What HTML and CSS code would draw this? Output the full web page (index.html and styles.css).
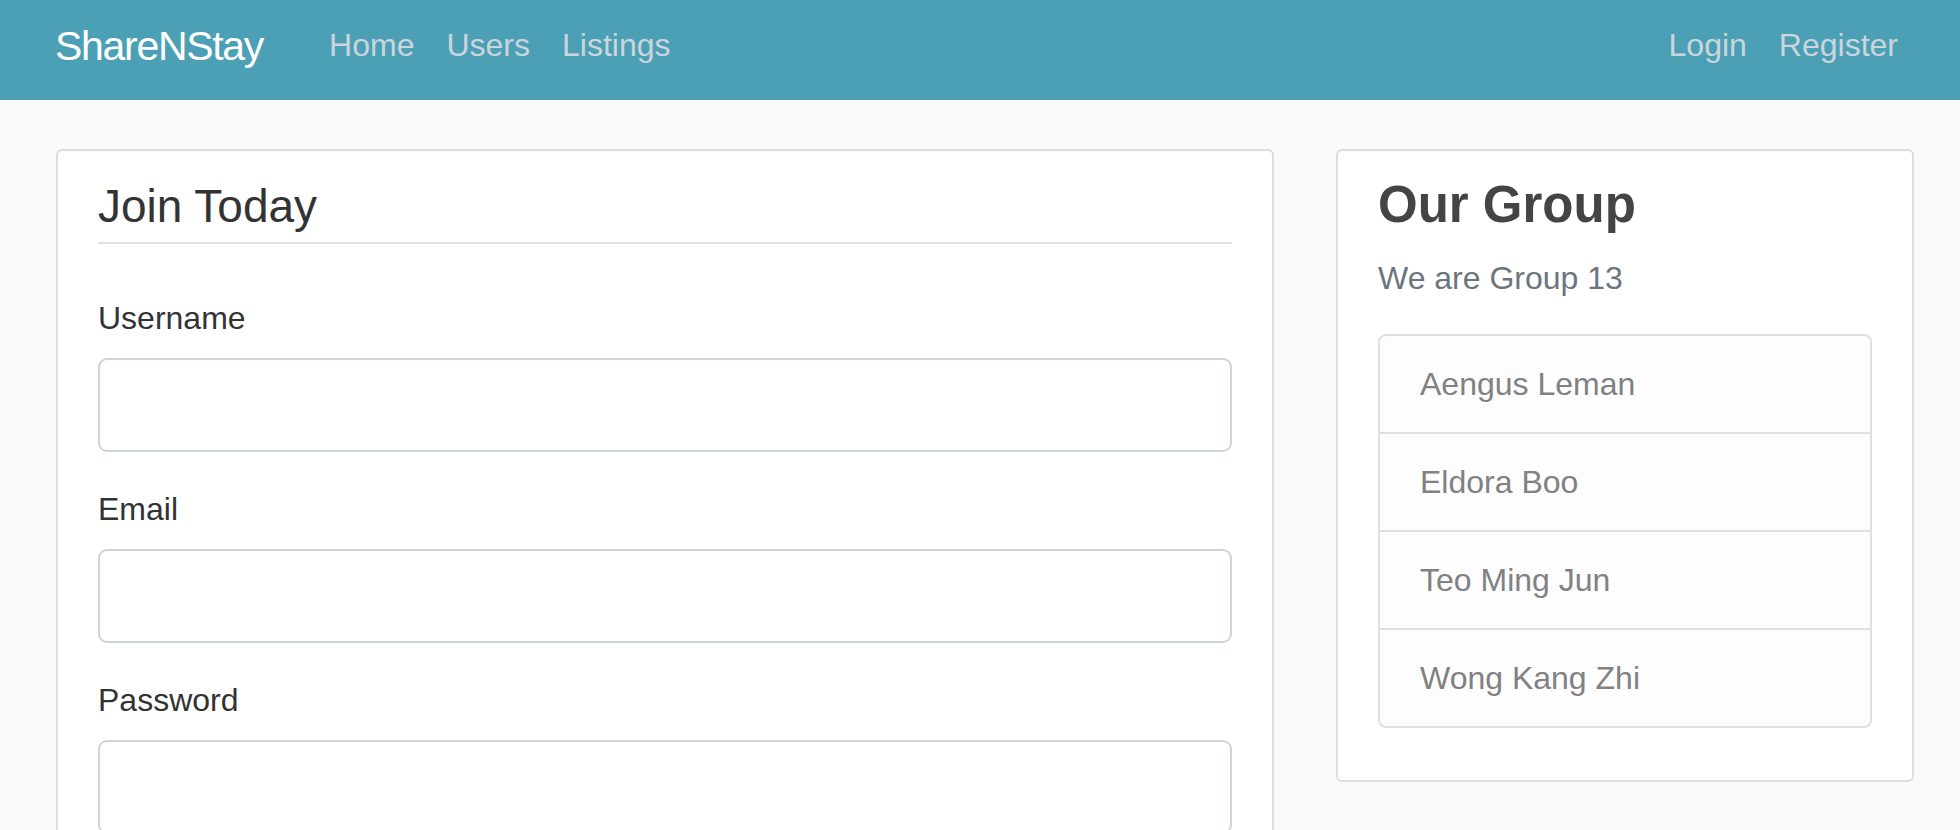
FILE: index.html
```html
<!DOCTYPE html>
<html lang="en">
<head>
<meta charset="utf-8">
<title>ShareNStay - Register</title>
<link rel="stylesheet" href="styles.css">
</head>
<body>
<header class="navbar">
  <a class="brand" href="#">ShareNStay</a>
  <nav class="nav nav-main">
    <a class="nav-link" href="#">Home</a>
    <a class="nav-link" href="#">Users</a>
    <a class="nav-link" href="#">Listings</a>
  </nav>
  <nav class="nav nav-account">
    <a class="nav-link" href="#">Login</a>
    <a class="nav-link" href="#">Register</a>
  </nav>
</header>
<main class="container">
  <section class="content-section form-card">
    <form>
      <fieldset class="fieldset">
        <legend class="legend">Join Today</legend>
        <div class="form-group">
          <label class="form-label" for="username">Username</label>
          <input class="form-control" id="username" type="text">
        </div>
        <div class="form-group">
          <label class="form-label" for="email">Email</label>
          <input class="form-control" id="email" type="email">
        </div>
        <div class="form-group">
          <label class="form-label" for="password">Password</label>
          <input class="form-control" id="password" type="password">
        </div>
      </fieldset>
    </form>
  </section>
  <aside class="content-section sidebar">
    <h3 class="sidebar-title">Our Group</h3>
    <p class="muted">We are Group 13</p>
    <ul class="list-group">
      <li class="list-item">Aengus Leman</li>
      <li class="list-item">Eldora Boo</li>
      <li class="list-item">Teo Ming Jun</li>
      <li class="list-item">Wong Kang Zhi</li>
    </ul>
  </aside>
</main>
</body>
</html>
```
FILE: styles.css
```css
html, body {
  overflow: hidden;
}
body {
  margin: 0;
  background: #fafafa;
  color: #333333;
  font-family: "Liberation Sans", Arial, sans-serif;
  font-size: 32px;
  line-height: 1.5;
}
a {
  text-decoration: none;
}

/* navbar */
.navbar {
  height: 100px;
  box-sizing: border-box;
  background: #4ba0b5;
  display: flex;
  align-items: flex-start;
  padding: 0 46px 0 55px;
}
.brand {
  color: #ffffff;
  font-size: 41px;
  line-height: 60px;
  letter-spacing: -1.3px;
  margin-top: 16px;
  margin-right: 50px;
}
.nav {
  display: flex;
}
.nav-account {
  margin-left: auto;
}
.nav-link {
  color: #cbd5db;
  font-size: 32px;
  line-height: 48px;
  padding: 21px 16px 0;
}

/* layout */
.container {
  display: grid;
  grid-template-columns: 1fr 578px;
  gap: 62px;
  align-items: start;
  padding: 49px 46px 0 56px;
}
.content-section {
  background: #ffffff;
  border: 2px solid #dddddd;
  border-radius: 6px;
  padding: 20px 40px;
  margin-bottom: 40px;
}

/* form */
.fieldset {
  border: 0;
  margin: 0;
  padding: 0;
  min-width: 0;
}
.legend {
  display: block;
  width: 100%;
  padding: 0;
  font-size: 46px;
  line-height: 71px;
  color: #333333;
  border-bottom: 2px solid #dee2e6;
  margin-bottom: 50px;
}
.form-group {
  margin-bottom: 33px;
}
.form-label {
  display: block;
  line-height: 48px;
  margin-bottom: 16px;
}
.form-control {
  display: block;
  width: 100%;
  height: 94px;
  box-sizing: border-box;
  border: 2px solid #ced4da;
  border-radius: 9px;
  background: #ffffff;
  font: inherit;
  padding: 0 24px;
}

/* sidebar */
.sidebar-title {
  margin: 0 0 16px;
  font-size: 51px;
  line-height: 67px;
  font-weight: 700;
  color: #444444;
}
.muted {
  margin: 0 0 32px;
  color: #6c757d;
  line-height: 48px;
}
.list-group {
  list-style: none;
  margin: 0 0 32px;
  padding: 0;
}
.list-item {
  background: #fdfdfe;
  color: #818182;
  border: 2px solid #dfdfdf;
  padding: 24px 40px;
  line-height: 48px;
  margin-bottom: -2px;
}
.list-item:first-child {
  border-radius: 8px 8px 0 0;
}
.list-item:last-child {
  border-radius: 0 0 8px 8px;
  margin-bottom: 0;
}
```
